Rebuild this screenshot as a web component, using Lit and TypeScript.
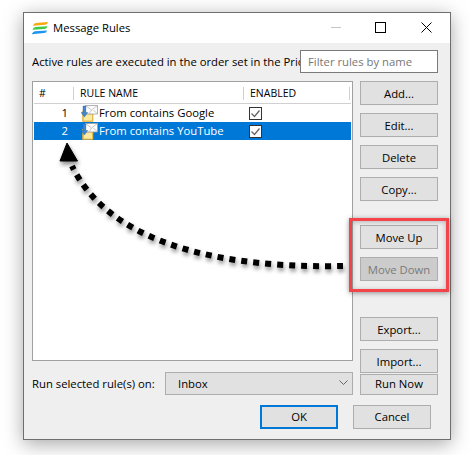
import { LitElement, html, css, svg } from "lit";
import { customElement } from "lit/decorators.js";

const ruleIcon = html`<svg class="ico" width="17" height="17" viewBox="0 0 17 17">
  <path d="M1.500 6h3l1 1.500h6.500v9h-10.500z" fill="#f0c24c" stroke="#d9a93a" stroke-width=".6"/>
  <path d="M3 9.500h8v6h-8z" fill="#fbe9a0"/>
  <path d="M4.500 .5h12v8.500h-12z" fill="#fdfdfd" stroke="#a0a0a0" stroke-width=".8"/>
  <path d="M4.500 .5l6 4.500 6-4.500M8 9l2.500-4M16.500 9l-4-4" fill="none" stroke="#b0b0b0" stroke-width=".7"/>
  <path d="M2 1h2.800v6.500h2l-3.400 4.500-3.400-4.500h2z" fill="#3f86cf" stroke="#2d67a8" stroke-width=".4"/>
</svg>`;

const check = html`<svg class="chk" width="13" height="13" viewBox="0 0 13 13">
  <rect x=".5" y=".5" width="12" height="12" fill="#fff" stroke="#333"/>
  <path d="M2.500 6.500l3 3 5-6" fill="none" stroke="#666" stroke-width="1.300"/>
</svg>`;

@customElement("app-root")
export class AppRoot extends LitElement {
  static styles = css`
    :host { display: block; width: 470px; height: 455px; background: #fff; position: relative; overflow: hidden;
      font-family: "Open Sans", "Noto Sans", sans-serif; font-size: 11.3px; color: #000; }
    .page { padding: 12px 0 0 23px; }
    .dialog { box-sizing: border-box; width: 428px; height: 428px; border: 1px solid #6e6e6e; background: #efefef;
      box-shadow: 0 4px 18px rgba(0,0,0,.35); display: flex; flex-direction: column; }
    .title { height: 30px; background: #fff; display: flex; align-items: center; padding-left: 8px; flex: none; }
    .title .logo { margin-right: 5px; }
    .title .name { flex: 1; padding-bottom: 2px; }
    .ctrl { display: flex; align-items: center; padding-bottom: 2px; }
    .ctrl svg { display: block; }
    .c1 { margin-right: 34px; }
    .c2 { margin-right: 35px; }
    .c3 { margin-right: 18px; }
    .body { padding: 7px 12px 0 8px; display: flex; flex-direction: column; }
    .top { display: flex; height: 23px; align-items: center; margin-bottom: 8px; }
    .intro { flex: 1; min-width: 0; white-space: nowrap; overflow: hidden; padding-bottom: 1px; }
    .filter { box-sizing: border-box; width: 138px; height: 23px; border: 1px solid #7a7a7a; background: #fff;
      padding: 0 7px; color: #777; line-height: 21px; flex: none; }
    .main { display: flex; gap: 7px; }
    .left { width: 321px; display: flex; flex-direction: column; }
    .list { box-sizing: border-box; width: 321px; height: 280px; border: 1px solid #a0a0a0; background: #fff; padding: 0 1px; }
    .head, .row { display: grid; grid-template-columns: 39px 170px 1fr; align-items: center; }
    .head { box-sizing: border-box; height: 22px; padding-top: 2px; border-bottom: 1px solid #d0d0d0; font-size: 10.5px; }
    .head > div { height: 13px; line-height: 13px; box-sizing: border-box; }
    .h-num { padding-left: 5px; }
    .h-name { border-left: 1px solid #d0d0d0; padding-left: 6px; }
    .h-en { border-left: 1px solid #d0d0d0; border-right: 1px solid #d0d0d0; padding-left: 6px; margin-right: 1px; }
    .row { height: 18px; }
    .row.sel { background: #0078d7; color: #fff; }
    .num { text-align: right; padding-right: 5px; padding-bottom: 1px; }
    .cell { display: flex; align-items: center; padding-left: 8px; }
    .label { padding-bottom: 1px; }
    .ico { margin-right: 1px; flex: none; }
    .chk { display: block; margin-left: 6px; }
    .combo-row { display: flex; align-items: center; margin-top: 11px; height: 23px; }
    .combo-label { width: 133px; flex: none; padding-bottom: 1px; }
    .combo { box-sizing: border-box; flex: 1; height: 23px; border: 1px solid #adadad; background: #e1e1e1;
      display: flex; align-items: center; justify-content: space-between; padding: 0 4px 1px 12px; }
    .side { width: 78px; display: flex; flex-direction: column; }
    button { box-sizing: border-box; width: 78px; height: 24px; border: 1px solid #adadad; background: #e1e1e1;
      font: inherit; color: #000; padding: 0; margin: 0; display: block; flex: none; }
    button.dis { background: #cccccc; color: #7a7a7a; }
    button.runnow { height: 21px; padding-bottom: 2px; }
    .m8 { margin-top: 8px; }
    .m1 { margin-top: 1px; }
    .m24 { margin-top: 24px; }
    .m36 { margin-top: 36px; }
    .foot { display: flex; justify-content: flex-end; gap: 15px; margin-top: 10px; padding-right: 7px; }
    .foot button { padding-bottom: 1px; }
    .ok { border: 2px solid #0078d7; }
    .redbox { position: absolute; left: 349px; top: 218px; width: 100px; height: 74px; box-sizing: border-box;
      border: 3px solid #f4444a; box-shadow: 0 1px 5px rgba(0,0,0,.4), inset 0 1px 5px rgba(0,0,0,.25); pointer-events: none; }
    .arrow { position: absolute; left: 0; top: 0; pointer-events: none; filter: drop-shadow(1px 3px 2px rgba(0,0,0,.45)); }
  `;

  render() {
    return html`<div class="page">
      <div class="dialog">
        <div class="title">
          <svg class="logo" width="16" height="13" viewBox="0 0 16 13">
            <path d="M1 3.500 Q2 1.200 4 1 L16 0 Q15.500 2.600 13 2.800 L1 3.800z" fill="#f8a80c"/>
            <path d="M.500 7.500 Q1.500 5.200 3.500 5 L15.500 4.200 Q15 6.700 12.500 6.900 L.500 7.800z" fill="#3fca45"/>
            <path d="M0 11.800 Q1 9.400 3 9.200 L15 8.400 Q14.500 10.900 12 11.100 L0 12.200z" fill="#1e96ee"/>
          </svg>
          <span class="name">Message Rules</span>
          <div class="ctrl">
            <svg class="c1" width="10" height="10" viewBox="0 0 10 10"><path d="M0 5.500h10" stroke="#c4c4c4"/></svg>
            <svg class="c2" width="11" height="11" viewBox="0 0 11 11"><rect x=".5" y=".5" width="10" height="10" fill="none" stroke="#000"/></svg>
            <svg class="c3" width="11" height="11" viewBox="0 0 11 11"><path d="M.5 .5l10 10M10.500 .5l-10 10" stroke="#000" fill="none"/></svg>
          </div>
        </div>
        <div class="body">
          <div class="top">
            <div class="intro">Active rules are executed in the order set in the Priority column</div>
            <div class="filter">Filter rules by name</div>
          </div>
          <div class="main">
            <div class="left">
              <div class="list">
                <div class="head">
                  <div class="h-num">#</div><div class="h-name">RULE NAME</div><div class="h-en">ENABLED</div>
                </div>
                <div class="row"><div class="num">1</div><div class="cell">${ruleIcon}<span class="label">From contains Google</span></div><div>${check}</div></div>
                <div class="row sel"><div class="num">2</div><div class="cell">${ruleIcon}<span class="label">From contains YouTube</span></div><div>${check}</div></div>
              </div>
              <div class="combo-row">
                <div class="combo-label">Run selected rule(s) on:</div>
                <div class="combo"><span>Inbox</span>
                  <svg width="9" height="6" viewBox="0 0 9 6"><path d="M.5 .5l4 4 4-4" fill="none" stroke="#666"/></svg>
                </div>
              </div>
            </div>
            <div class="side">
              <button>Add...</button>
              <button class="m8">Edit...</button>
              <button class="m8">Delete</button>
              <button class="m8">Copy...</button>
              <button class="m24">Move Up</button>
              <button class="m8 dis">Move Down</button>
              <button class="m36">Export...</button>
              <button class="m8">Import...</button>
              <button class="m1 runnow">Run Now</button>
            </div>
          </div>
          <div class="foot">
            <button class="ok">OK</button>
            <button>Cancel</button>
          </div>
        </div>
      </div>
    </div>
    <div class="redbox"></div>
    <svg class="arrow" width="470" height="455" viewBox="0 0 470 455">
      ${svg`<path d="M343 266 C250 268 115 255 72 166" fill="none" stroke="#000" stroke-width="6" stroke-dasharray="6 6"/>
      <path d="M67 143 L77.500 161 L60 161z" fill="#000" stroke="#000" stroke-linejoin="round"/>`}
    </svg>`;
  }
}
